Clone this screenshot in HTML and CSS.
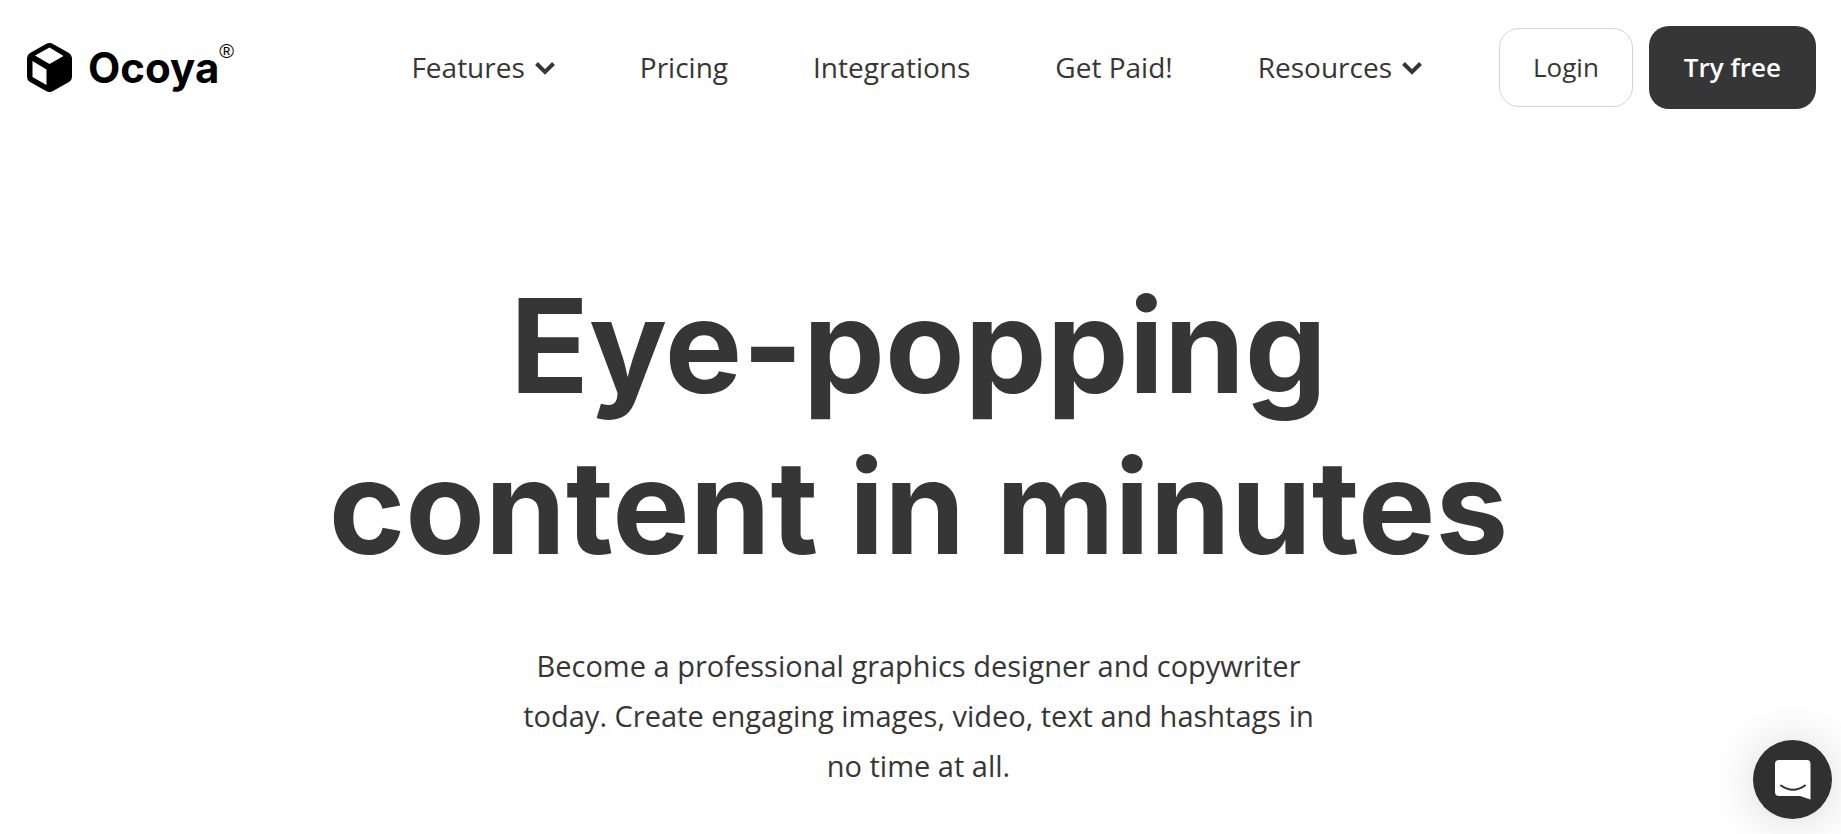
FILE: index.html
```html
<!DOCTYPE html>
<html lang="en">
<head>
<meta charset="utf-8">
<title>Ocoya</title>
<meta name="viewport" content="width=device-width, initial-scale=1">
<link rel="stylesheet" href="styles.css">
</head>
<body>
<header class="header">
  <a class="brand" href="#">
    <svg class="brand-mark" viewBox="0 0 45 49" aria-hidden="true">
      <path d="M19 1Q22.500-1 26 1L42 10Q45 12 45 15V34Q45 37 42 39L26 48Q22.500 50 19 48L3 39Q0 37 0 34V15Q0 12 3 10Z" fill="#000"/>
      <path d="M22.500 4.500L36.500 13L22.500 21L8 12.500Z" fill="#fff"/>
      <path d="M5.500 18L19.500 26.500V42L5.500 34Z" fill="#fff"/>
    </svg>
    <span class="brand-name">Ocoya</span><span class="brand-reg">®</span>
  </a>
  <nav class="nav" aria-label="Main">
    <button class="nav-item" type="button">Features
      <svg class="chevron" viewBox="0 0 20 13" aria-hidden="true"><path d="M1.500 1.500L10 10L18.500 1.500"/></svg>
    </button>
    <a class="nav-item" href="#">Pricing</a>
    <a class="nav-item" href="#">Integrations</a>
    <a class="nav-item" href="#">Get Paid!</a>
    <button class="nav-item" type="button">Resources
      <svg class="chevron" viewBox="0 0 20 13" aria-hidden="true"><path d="M1.500 1.500L10 10L18.500 1.500"/></svg>
    </button>
  </nav>
  <div class="actions">
    <a class="btn btn-outline" href="#">Login</a>
    <a class="btn btn-solid" href="#">Try free</a>
  </div>
</header>
<main class="hero">
  <h1 class="hero-title">Eye-popping<br>content in minutes</h1>
  <p class="hero-text">Become a professional graphics designer and copywriter<br>today. Create engaging images, video, text and hashtags in<br>no time at all.</p>
</main>
<button class="chat" type="button" aria-label="Open chat">
  <svg class="chat-icon" viewBox="0 0 36 40" aria-hidden="true">
    <path d="M4 0H32Q35.500 0 35.500 4V39.500L25 36H4Q0 36 0 32V4Q0 0 4 0Z" fill="#fff"/>
    <path d="M6 25.500Q18 34 30 25.500" fill="none" stroke="#303030" stroke-width="2" stroke-linecap="round"/>
  </svg>
</button>
</body>
</html>
```
FILE: styles.css
```css
* { box-sizing: border-box; }
body {
  margin: 0;
  background: #fff;
  color: #363636;
  font-family: "Open Sans", sans-serif;
}
a { color: inherit; text-decoration: none; }
button { margin: 0; padding: 0; border: 0; background: none; color: inherit; font: inherit; cursor: pointer; }
.header {
  display: flex;
  align-items: center;
  padding: 26px 25px 0 27px;
}
.brand { display: flex; align-items: center; color: #000; }
.brand-mark { width: 45px; height: 49px; margin-right: 16px; }
.brand-name { font: 700 42px/48px Inter, sans-serif; }
.brand-reg { align-self: flex-start; font: 20px/16px "Liberation Sans", sans-serif; }
.nav {
  flex: 1;
  display: flex;
  justify-content: flex-end;
  gap: 85px;
  margin-right: 77px;
  padding-bottom: 2px;
}
.nav-item {
  display: flex;
  align-items: center;
  gap: 10px;
  font-size: 28px;
  line-height: 40px;
  white-space: nowrap;
}
.chevron { width: 20px; height: 13px; margin-top: 4px; fill: none; stroke: currentColor; stroke-width: 4; }
.actions { display: flex; align-items: center; gap: 16px; }
.btn { border-radius: 20px; font-size: 26px; text-align: center; white-space: nowrap; }
.btn-outline { padding: 0 33px; border: 1px solid #d2d3df; line-height: 77px; }
.btn-solid { padding: 0 35px; background: #363636; color: #fff; font-weight: 600; line-height: 83px; }
.hero { padding: 156px 28px 0 24px; text-align: center; }
.hero-title { margin: 0; font: 700 130px/161px Inter, sans-serif; }
.hero-text { margin: 54px 0 0; font-size: 29px; line-height: 50px; }
.chat {
  position: fixed;
  right: 9px;
  bottom: 15px;
  display: grid;
  place-items: center;
  width: 79px;
  height: 79px;
  border-radius: 50%;
  background: #303030;
  box-shadow: 0 2px 50px rgba(0, 0, 0, 0.16);
}
.chat-icon { width: 36px; height: 40px; }
```
